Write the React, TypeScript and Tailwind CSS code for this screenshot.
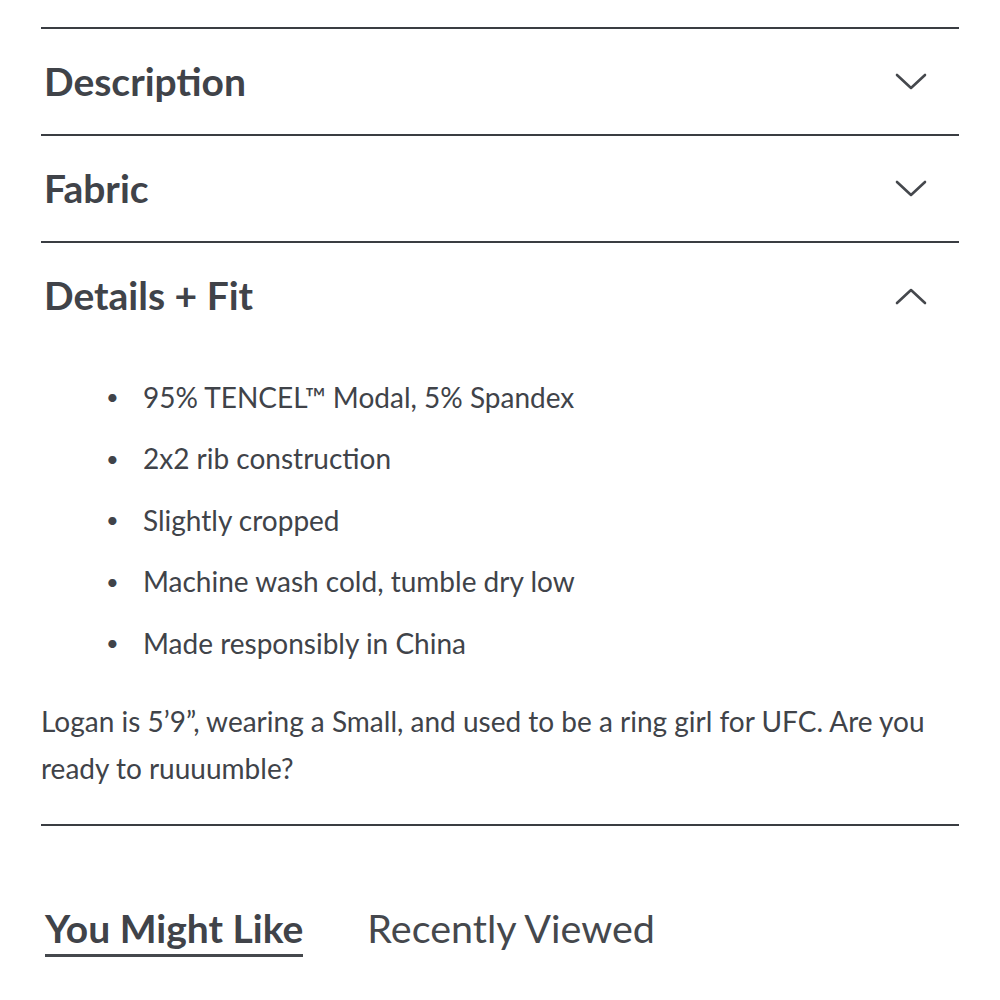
import { ReactNode } from 'react';

const font = { fontFamily: 'Lato, "Open Sans", sans-serif' };

function Chevron({ up }: { up?: boolean }) {
  return (
    <svg width="32" height="18" viewBox="0 0 32 18" fill="none" className="text-[#45484d]">
      <polyline
        points={up ? '2,16 16,3 30,16' : '2,2 16,15 30,2'}
        stroke="currentColor"
        strokeWidth="2.6"
        strokeLinecap="round"
        strokeLinejoin="round"
      />
    </svg>
  );
}

function Section({ title, open, children }: { title: string; open?: boolean; children?: ReactNode }) {
  return (
    <div className="border-t-2 border-[#3a3d42]">
      <div className="flex items-center justify-between h-[105px] pl-[3px] pr-[32px]">
        <h2 className="text-[39px] font-bold text-[#404349] leading-none">{title}</h2>
        <Chevron up={open} />
      </div>
      {children}
    </div>
  );
}

const details = [
  '95% TENCEL™ Modal, 5% Spandex',
  '2x2 rib construction',
  'Slightly cropped',
  'Machine wash cold, tumble dry low',
  'Made responsibly in China',
];

export default function App() {
  return (
    <div className="bg-white min-h-[1000px] px-[41px] pt-[27px] text-[#404349]" style={font}>
      <Section title="Description" />
      <Section title="Fabric" />
      <Section title="Details + Fit" open>
        <ul className="pt-[18px] pl-[65px]">
          {details.map((d) => (
            <li key={d} className="flex items-center h-[61.5px] text-[28px]">
              <span className="w-[37px] text-[22px]">•</span>
              <span>{d}</span>
            </li>
          ))}
        </ul>
        <p className="text-[28px] leading-[47px] pt-[24px] pb-[32px] pr-4">
          Logan is 5’9”, wearing a Small, and used to be a ring girl for UFC. Are you ready to ruuuumble?
        </p>
      </Section>
      <div className="border-t-2 border-[#3a3d42]" />
      <div className="flex items-end gap-[64px] pt-[78px] pl-[4px]">
        <div className="text-[39px] font-bold text-[#404349] border-b-[3px] border-[#45484d] leading-[48px] pb-[2px]">
          You Might Like
        </div>
        <div className="text-[39.5px] text-[#45484d] leading-[48px] pb-[5px]">Recently Viewed</div>
      </div>
    </div>
  );
}
